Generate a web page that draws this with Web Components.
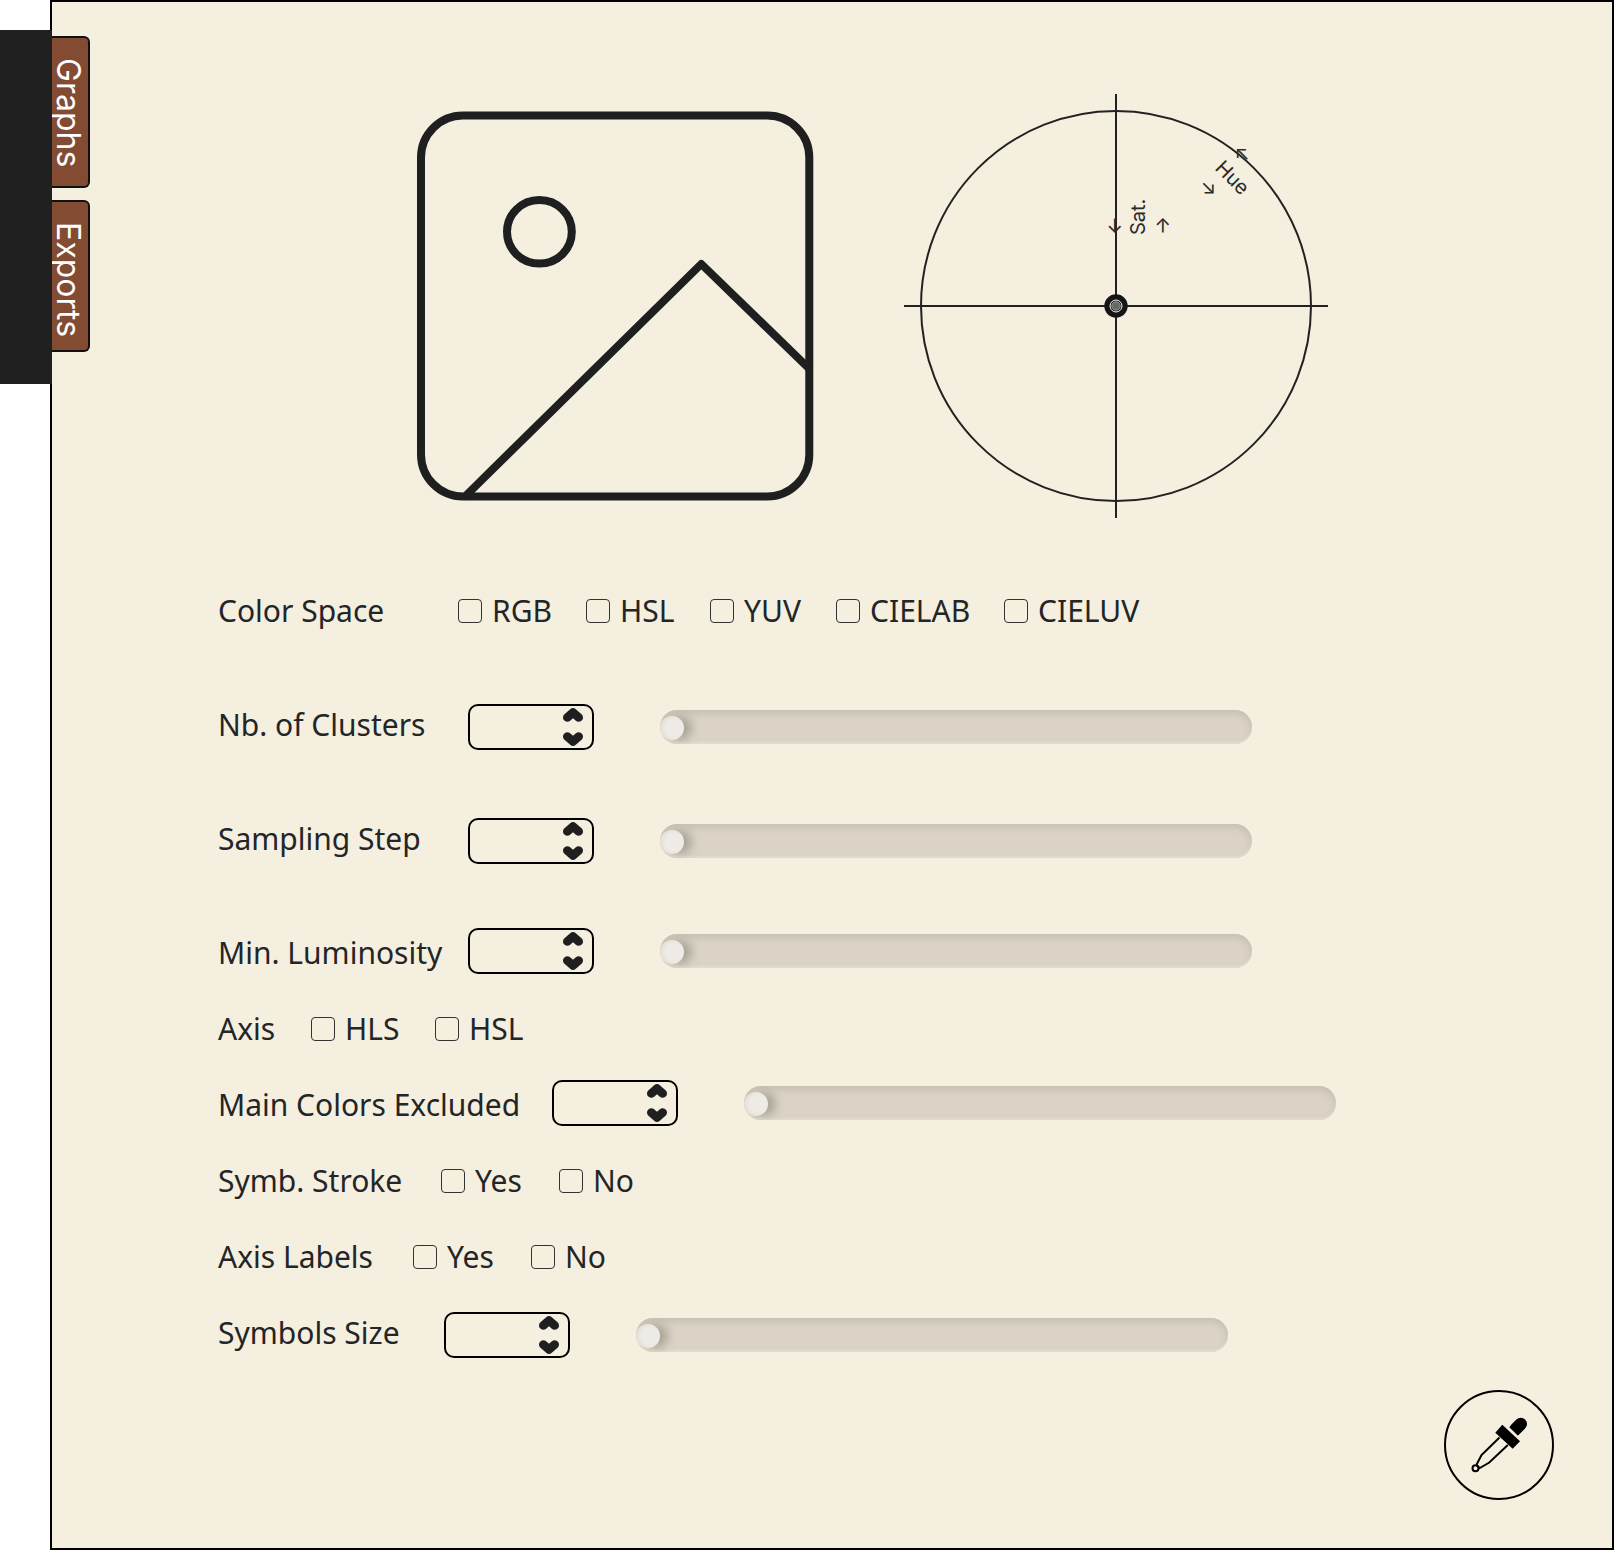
<!DOCTYPE html>
<html lang="en">
<head>
<meta charset="utf-8">
<title>Palette settings</title>
<style>
body { margin: 0; background: #fff; color: #232526; font: 30px/42px "Noto Sans", sans-serif; }
</style>
</head>
<body>
<palette-app></palette-app>
<script>
const make = (host, html) => { host.attachShadow({ mode: "open" }).innerHTML = html; };

customElements.define("side-tab", class extends HTMLElement {
  connectedCallback() {
    make(this, `<style>
      :host { display: block; }
      button { display: flex; box-sizing: border-box; width: 38px; height: 152px; margin: 0; padding: 20px 4px 0 0;
        border: 2px solid #111; border-left: 0; border-radius: 0 6px 6px 0; background: #824b32; color: #fff;
        font: 32px/32px Inter, sans-serif; writing-mode: vertical-rl; text-align: start; align-items: center; cursor: pointer; }
    </style><button type="button"><slot></slot></button>`);
  }
});

customElements.define("picture-placeholder", class extends HTMLElement {
  connectedCallback() {
    make(this, `<style>:host { display: block; flex: 0 1 397px; } svg { display: block; width: 100%; }</style>
    <svg viewBox="417 111 397 390" fill="none" stroke="#1f1f1f" stroke-width="8" stroke-linejoin="round" role="img" aria-label="Picture">
      <rect x="421" y="115.5" width="388.3" height="381" rx="42" ry="42"/>
      <ellipse cx="539.4" cy="231.8" rx="32.4" ry="31.8"/>
      <path d="M464.5 497 701.3 264 809 368.5"/>
    </svg>`);
  }
});

customElements.define("hue-wheel", class extends HTMLElement {
  connectedCallback() {
    make(this, `<style>:host { display: block; flex: 0 1 424px; } svg { display: block; width: 100%; }
      text { font: 400 20px Inter, sans-serif; fill: #2a2a2a; }</style>
    <svg viewBox="904 94 424 424" fill="none" stroke-width="2" role="img" aria-label="Hue and saturation wheel">
      <circle cx="1116" cy="306" r="195" stroke="#222"/>
      <path d="M1116 94V518M904 306H1328" stroke="#222"/>
      <circle cx="1116" cy="306" r="11.7" fill="#151515"/>
      <circle cx="1116" cy="306" r="6" fill="#222" stroke="#eee" stroke-width="1"/>
      <circle cx="1116" cy="306" r="4.2" fill="#666" stroke="#999" stroke-width="1"/>
      <g transform="translate(1145 235) rotate(-90)"><text y="-24">←</text><text>Sat.</text><text y="24">→</text></g>
      <g transform="translate(1214 169) rotate(45)"><text y="-24">←</text><text>Hue</text><text y="24">→</text></g>
    </svg>`);
  }
});

customElements.define("check-option", class extends HTMLElement {
  connectedCallback() {
    make(this, `<style>
      :host { display: block; }
      label { display: flex; align-items: center; gap: 10px; white-space: nowrap; cursor: pointer; }
      input { appearance: none; flex: none; box-sizing: border-box; width: 24px; height: 24px; margin: 0;
        border: 1px solid #333; border-radius: 4px; background: transparent; }
      input:checked { background: #333; }
    </style><label><input type="checkbox"><span><slot></slot></span></label>`);
  }
});

customElements.define("check-row", class extends HTMLElement {
  connectedCallback() {
    make(this, `<style>
      :host { display: block; }
      div { display: grid; grid-template-columns: var(--columns); align-items: center; white-space: nowrap; }
    </style><div role="group" aria-label="${this.getAttribute("label")}"><span>${this.getAttribute("label")}</span><slot></slot></div>`);
  }
});

customElements.define("slider-row", class extends HTMLElement {
  connectedCallback() {
    make(this, `<style>
      :host { display: flex; align-items: flex-start; }
      :host([low]) { align-items: flex-end; margin-top: -4px; }
      label { flex: none; width: var(--label, 250px); white-space: nowrap; }
      .number { flex: none; display: flex; align-items: center; box-sizing: border-box; width: 126px; height: 46px;
        padding: 0 9px 0 8px; margin-right: 66px; border: 2px solid #000; border-radius: 10px; }
      .number input { flex: 1; min-width: 0; padding: 0; border: 0; outline: 0; background: none; color: inherit;
        font: inherit; appearance: textfield; }
      .number input::-webkit-inner-spin-button { display: none; }
      .steps { display: flex; flex-direction: column; gap: 10px; }
      .steps button { display: block; padding: 0; border: 0; background: none; cursor: pointer; }
      svg { display: block; }
      .range { appearance: none; flex: 0 1 592px; min-width: 120px; height: 34px; margin: 6px 0; border-radius: 17px;
        background: #dbd4c6; box-shadow: inset 0 3px 8px #c3bcad, inset 0 -2px 2px #eae4d6; overflow: hidden; }
      .range::-webkit-slider-thumb { appearance: none; width: 24px; height: 24px; margin-top: 2px; border-radius: 12px;
        background: #efece7; box-shadow: 8px 0 10px #a9a596, inset 2px 0 4px #dedad3; }
    </style>
    <label for="n">${this.getAttribute("label")}</label>
    <div class="number"><input id="n" type="number">
      <div class="steps">
        <button type="button" aria-label="Increase"><svg width="20" height="14" viewBox="0 0 20 14"><path d="M4.300 9.500 10 4.500 15.700 9.500" fill="none" stroke="#1f1f1f" stroke-width="8.600" stroke-linecap="round" stroke-linejoin="round"/></svg></button>
        <button type="button" aria-label="Decrease"><svg width="20" height="14" viewBox="0 0 20 14"><path d="M4.300 4.500 10 9.500 15.700 4.500" fill="none" stroke="#1f1f1f" stroke-width="8.600" stroke-linecap="round" stroke-linejoin="round"/></svg></button>
      </div></div>
    <input class="range" type="range" value="0" aria-label="${this.getAttribute("label")}">`);
  }
});

customElements.define("picker-button", class extends HTMLElement {
  connectedCallback() {
    make(this, `<style>
      :host { display: block; }
      button { display: grid; place-items: center; box-sizing: border-box; width: 110px; height: 110px; margin: 0; padding: 0;
        border: 2px solid #000; border-radius: 50%; background: none; cursor: pointer; }
    </style><button type="button" aria-label="Pick a colour">
      <svg width="66" height="66" viewBox="0 0 66 66">
        <clipPath id="bulb"><path d="M43.300 15.300 52 23.700 66 12V0H52Z"/></clipPath>
        <path d="M46 21 54.800 11.900" fill="none" stroke="#000" stroke-width="12.500" stroke-linecap="round" clip-path="url(#bulb)"/>
        <path d="M36.300 12.700 54 29.300 46.700 36.700 29.300 20.700Z"/>
        <path d="M33.500 25.500 15.500 43 10.500 52.800M41.800 33 23.300 50.500 13 56.500M10.500 53 14 56.500" fill="none" stroke="#000" stroke-width="2"/>
        <circle cx="9.500" cy="56.300" r="3" fill="none" stroke="#000" stroke-width="2"/>
      </svg></button>`);
  }
});

customElements.define("palette-app", class extends HTMLElement {
  connectedCallback() {
    make(this, `<style>
      :host { display: flex; align-items: flex-start; min-height: 100vh; }
      .rail { flex: none; width: 52px; height: 354px; margin: 30px -2px 0 0; background: #202020; z-index: 1; }
      main { flex: 1; min-width: 0; display: flex; box-sizing: border-box; min-height: 100vh; border: 2px solid #000; background: #f5efe0; }
      nav { flex: none; display: flex; flex-direction: column; gap: 12px; width: 38px; padding-top: 34px; }
      .content { flex: 1; min-width: 0; }
      .figures { display: flex; align-items: flex-start; gap: 90px; padding: 92px 40px 72px 327px; }
      picture-placeholder { margin-top: 17px; }
      form { display: flex; flex-direction: column; gap: 34px; padding: 0 40px 0 128px; }
      .roomy { display: flex; flex-direction: column; gap: 68px; }
      .roomy check-row { margin-bottom: 4px; }
      footer { display: flex; justify-content: flex-end; padding: 32px 58px 48px; }
    </style>
    <div class="rail"></div>
    <main>
      <nav><side-tab>Graphs</side-tab><side-tab>Exports</side-tab></nav>
      <div class="content">
        <div class="figures"><picture-placeholder></picture-placeholder><hue-wheel></hue-wheel></div>
        <form>
          <div class="roomy">
            <check-row label="Color Space" style="--columns: 240px 128px 124px 126px 168px auto">
              <check-option>RGB</check-option><check-option>HSL</check-option><check-option>YUV</check-option><check-option>CIELAB</check-option><check-option>CIELUV</check-option>
            </check-row>
            <slider-row label="Nb. of Clusters"></slider-row>
            <slider-row label="Sampling Step"></slider-row>
            <slider-row label="Min. Luminosity" low></slider-row>
          </div>
          <check-row label="Axis" style="--columns: 93px 124px auto"><check-option>HLS</check-option><check-option>HSL</check-option></check-row>
          <slider-row label="Main Colors Excluded" low style="--label: 334px"></slider-row>
          <check-row label="Symb. Stroke" style="--columns: 223px 118px auto"><check-option>Yes</check-option><check-option>No</check-option></check-row>
          <check-row label="Axis Labels" style="--columns: 195px 118px auto"><check-option>Yes</check-option><check-option>No</check-option></check-row>
          <slider-row label="Symbols Size" style="--label: 226px"></slider-row>
        </form>
        <footer><picker-button></picker-button></footer>
      </div>
    </main>`);
  }
});
</script>
</body>
</html>
